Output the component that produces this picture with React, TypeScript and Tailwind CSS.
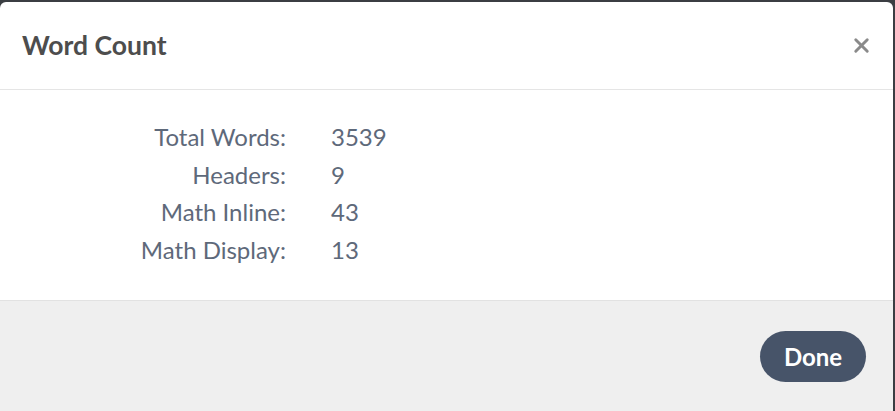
import { X } from 'lucide-react';

const stats = [
  { label: 'Total Words:', value: '3539' },
  { label: 'Headers:', value: '9' },
  { label: 'Math Inline:', value: '43' },
  { label: 'Math Display:', value: '13' },
];

export default function App() {
  return (
    <div className="h-[411px] w-[895px] overflow-hidden bg-[#3b3e43] pt-[2px] pr-[2px]" style={{ fontFamily: 'Lato, "Noto Sans", sans-serif' }}>
      <div className="flex h-[420px] flex-col overflow-hidden rounded-t-[6px] bg-white">
        {/* header */}
        <div className="flex h-[88px] shrink-0 items-center justify-between border-b border-[#e5e5e5] pl-[22px] pr-[20px]">
          <h1 className="text-[26.5px] font-bold text-[#4d4d4d]">Word Count</h1>
          <button className="text-[#8a8a8a]">
            <X size={23} strokeWidth={3} />
          </button>
        </div>

        {/* body */}
        <div className="h-[210px] shrink-0 pt-[28px]">
          <div className="grid grid-cols-[286px_auto] gap-x-[45px] text-[24px] leading-[37.5px] text-[#5e697a]">
            {stats.map((s) => (
              <div key={s.label} className="contents">
                <div className="text-right">{s.label}</div>
                <div>{s.value}</div>
              </div>
            ))}
          </div>
        </div>

        {/* footer */}
        <div className="flex h-[120px] items-start justify-end border-t border-[#e2e2e2] bg-[#efefef] pr-[27px] pt-[30px]">
          <button className="h-[51px] w-[106px] rounded-full bg-[#475469] text-[24px] font-bold text-white">Done</button>
        </div>
      </div>
    </div>
  );
}
